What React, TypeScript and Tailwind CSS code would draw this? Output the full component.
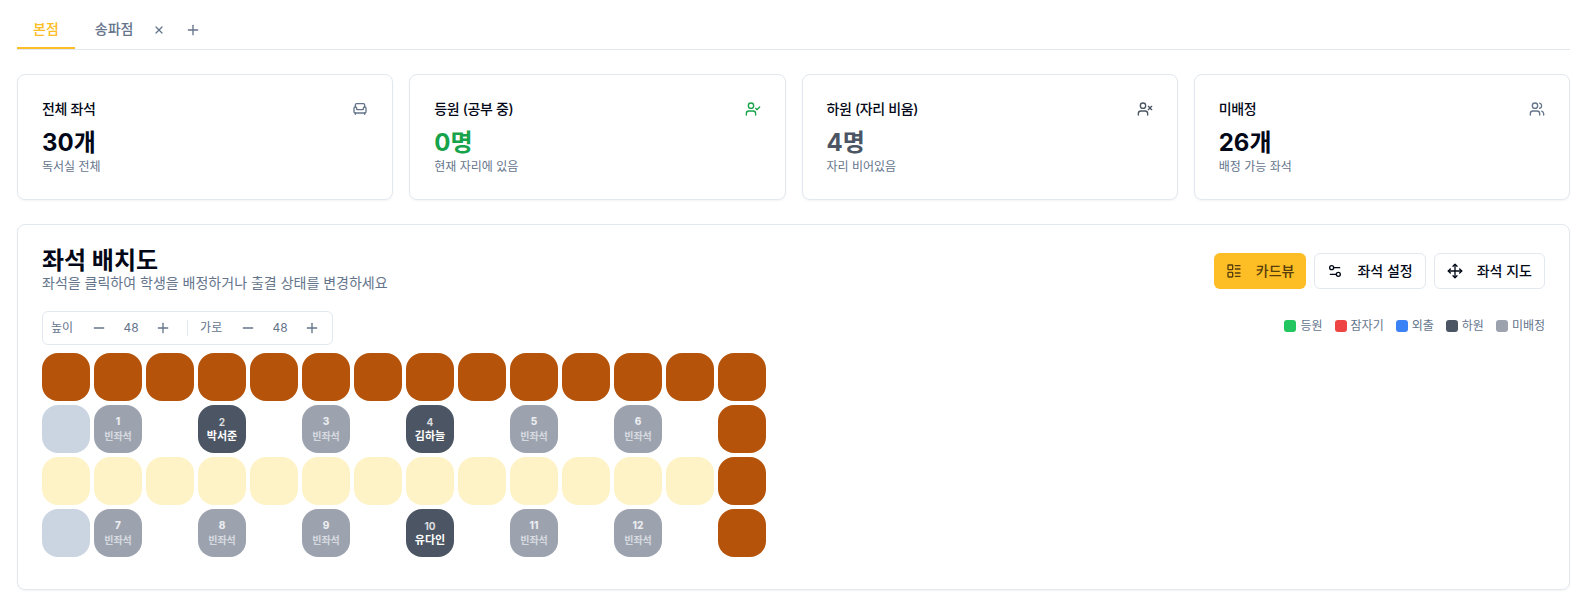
import { useState } from "react";
import { Armchair, LayoutList, Minus, Move, Plus, Settings2, UserCheck, Users, UserX, X } from "lucide-react";

const stats = [
  { title: "전체 좌석", value: "30개", desc: "독서실 전체", icon: Armchair, valueColor: "", iconColor: "text-[#64748b]" },
  { title: "등원 (공부 중)", value: "0명", desc: "현재 자리에 있음", icon: UserCheck, valueColor: "text-[#16a34a]", iconColor: "text-[#16a34a]" },
  { title: "하원 (자리 비움)", value: "4명", desc: "자리 비어있음", icon: UserX, valueColor: "text-[#4b5563]", iconColor: "text-[#4b5563]" },
  { title: "미배정", value: "26개", desc: "배정 가능 좌석", icon: Users, valueColor: "", iconColor: "text-[#64748b]" },
];

const legend = [
  { label: "등원", color: "bg-[#22c55e]" },
  { label: "잠자기", color: "bg-[#ef4444]" },
  { label: "외출", color: "bg-[#3b82f6]" },
  { label: "하원", color: "bg-[#4b5563]" },
  { label: "미배정", color: "bg-[#9ca3af]" },
];

// W: wall, P: pillar, A: aisle, ".": empty space, number: seat
const layout = [
  "W W W W W W W W W W W W W W",
  "P 1 . 2 . 3 . 4 . 5 . 6 . W",
  "A A A A A A A A A A A A A W",
  "P 7 . 8 . 9 . 10 . 11 . 12 . W",
].map((row) => row.split(" "));

const students: Record<string, string> = {
  "2": "박서준",
  "4": "김하늘",
  "10": "유다인",
};

const blocks: Record<string, string> = {
  W: "bg-[#b45309]",
  P: "bg-[#cbd5e1]",
  A: "bg-[#fef3c7]",
  ".": "",
};

const Cell = ({ value }: { value: string }) => {
  if (value in blocks) {
    return <div className={`rounded-2xl ${blocks[value]}`} />;
  }

  const name = students[value];

  if (name) {
    return (
      <button className="flex flex-col items-center justify-center rounded-2xl bg-[#4b5563] pt-px text-white">
        <span className="text-[10px] font-bold leading-[13px] opacity-80">{value}</span>
        <span className="text-[11px] font-bold leading-[14px]">{name}</span>
      </button>
    );
  }

  return (
    <button className="flex flex-col items-center justify-center rounded-2xl bg-[#9ca3af] text-white">
      <span className="text-[10px] font-extrabold leading-[15px] opacity-80">{value}</span>
      <span className="text-[10px] font-bold leading-[15px] opacity-60">빈좌석</span>
    </button>
  );
};

const Stepper = ({ label, value, onChange }: { label: string; value: number; onChange: (v: number) => void }) => (
  <div className="flex items-center">
    <span className="mr-2.5">{label}</span>
    <button className="flex size-8 items-center justify-center" onClick={() => onChange(value - 4)}>
      <Minus size={16} />
    </button>
    <span className="w-8 text-center">{value}</span>
    <button className="flex size-8 items-center justify-center" onClick={() => onChange(value + 4)}>
      <Plus size={16} />
    </button>
  </div>
);

const App = () => {
  const [cellHeight, setCellHeight] = useState(48);
  const [cellWidth, setCellWidth] = useState(48);

  return (
    <div className="min-h-screen bg-white pt-[11px] pr-4 pl-[17px] font-['Inter','Noto_Sans_CJK_KR',sans-serif] text-[#020817]">
      {/* 지점 탭 */}
      <div className="flex items-center gap-1 border-b border-[#e2e8f0] text-sm font-medium text-[#64748b]">
        <button className="border-b-2 border-[#fdbd24] px-4 py-2 text-[#fdbd24]">본점</button>
        <div className="flex items-center">
          <button className="border-b-2 border-transparent px-4 py-2">송파점</button>
          <button className="p-1">
            <X size={12} strokeWidth={2.5} />
          </button>
        </div>
        <button className="ml-1 flex w-8 justify-center">
          <Plus size={16} />
        </button>
      </div>

      {/* 통계 카드 */}
      <div className="mt-6 grid grid-cols-4 gap-4">
        {stats.map((stat) => (
          <div key={stat.title} className="rounded-lg border border-[#e2e8f0] p-6 shadow-xs">
            <div className="flex items-center justify-between pb-2">
              <h3 className="text-sm font-medium tracking-tight">{stat.title}</h3>
              <stat.icon size={16} className={stat.iconColor} />
            </div>
            <div className={`text-2xl font-bold ${stat.valueColor}`}>{stat.value}</div>
            <p className="text-xs text-[#64748b]">{stat.desc}</p>
          </div>
        ))}
      </div>

      {/* 좌석 배치도 */}
      <div className="mt-6 rounded-lg border border-[#e2e8f0] px-6 pt-6 pb-8 shadow-xs">
        <div className="flex items-center justify-between">
          <div>
            <h2 className="text-2xl leading-none font-bold">좌석 배치도</h2>
            <p className="text-sm text-[#64748b]">좌석을 클릭하여 학생을 배정하거나 출결 상태를 변경하세요</p>
          </div>
          <div className="flex gap-2 text-sm font-medium">
            <button className="flex h-9 items-center gap-3.5 rounded-md bg-[#fdbd24] px-3 text-[#573e0c]">
              <LayoutList size={16} />
              카드뷰
            </button>
            <button className="flex h-9 items-center gap-3.5 rounded-md border border-[#e2e8f0] px-3">
              <Settings2 size={16} />
              좌석 설정
            </button>
            <button className="flex h-9 items-center gap-3.5 rounded-md border border-[#e2e8f0] px-3">
              <Move size={16} />
              좌석 지도
            </button>
          </div>
        </div>

        <div className="mt-[18px] mb-2 flex items-start justify-between text-xs text-[#64748b]">
          <div className="flex items-center rounded-md border border-[#e2e8f0] pr-1 pl-2">
            <Stepper label="높이" value={cellHeight} onChange={setCellHeight} />
            <div className="mr-3 ml-2 h-4 w-px bg-[#e2e8f0]" />
            <Stepper label="가로" value={cellWidth} onChange={setCellWidth} />
          </div>
          <div className="mt-[7px] flex items-center gap-3">
            {legend.map((item) => (
              <div key={item.label} className="flex items-center gap-1">
                <div className={`size-3 rounded-[3px] ${item.color}`} />
                <span>{item.label}</span>
              </div>
            ))}
          </div>
        </div>

        <div
          className="grid gap-1"
          style={{
            gridTemplateColumns: `repeat(14, ${cellWidth}px)`,
            gridAutoRows: `${cellHeight}px`,
          }}
        >
          {layout.flat().map((value, i) => (
            <Cell key={i} value={value} />
          ))}
        </div>
      </div>
    </div>
  );
};

export default App;
